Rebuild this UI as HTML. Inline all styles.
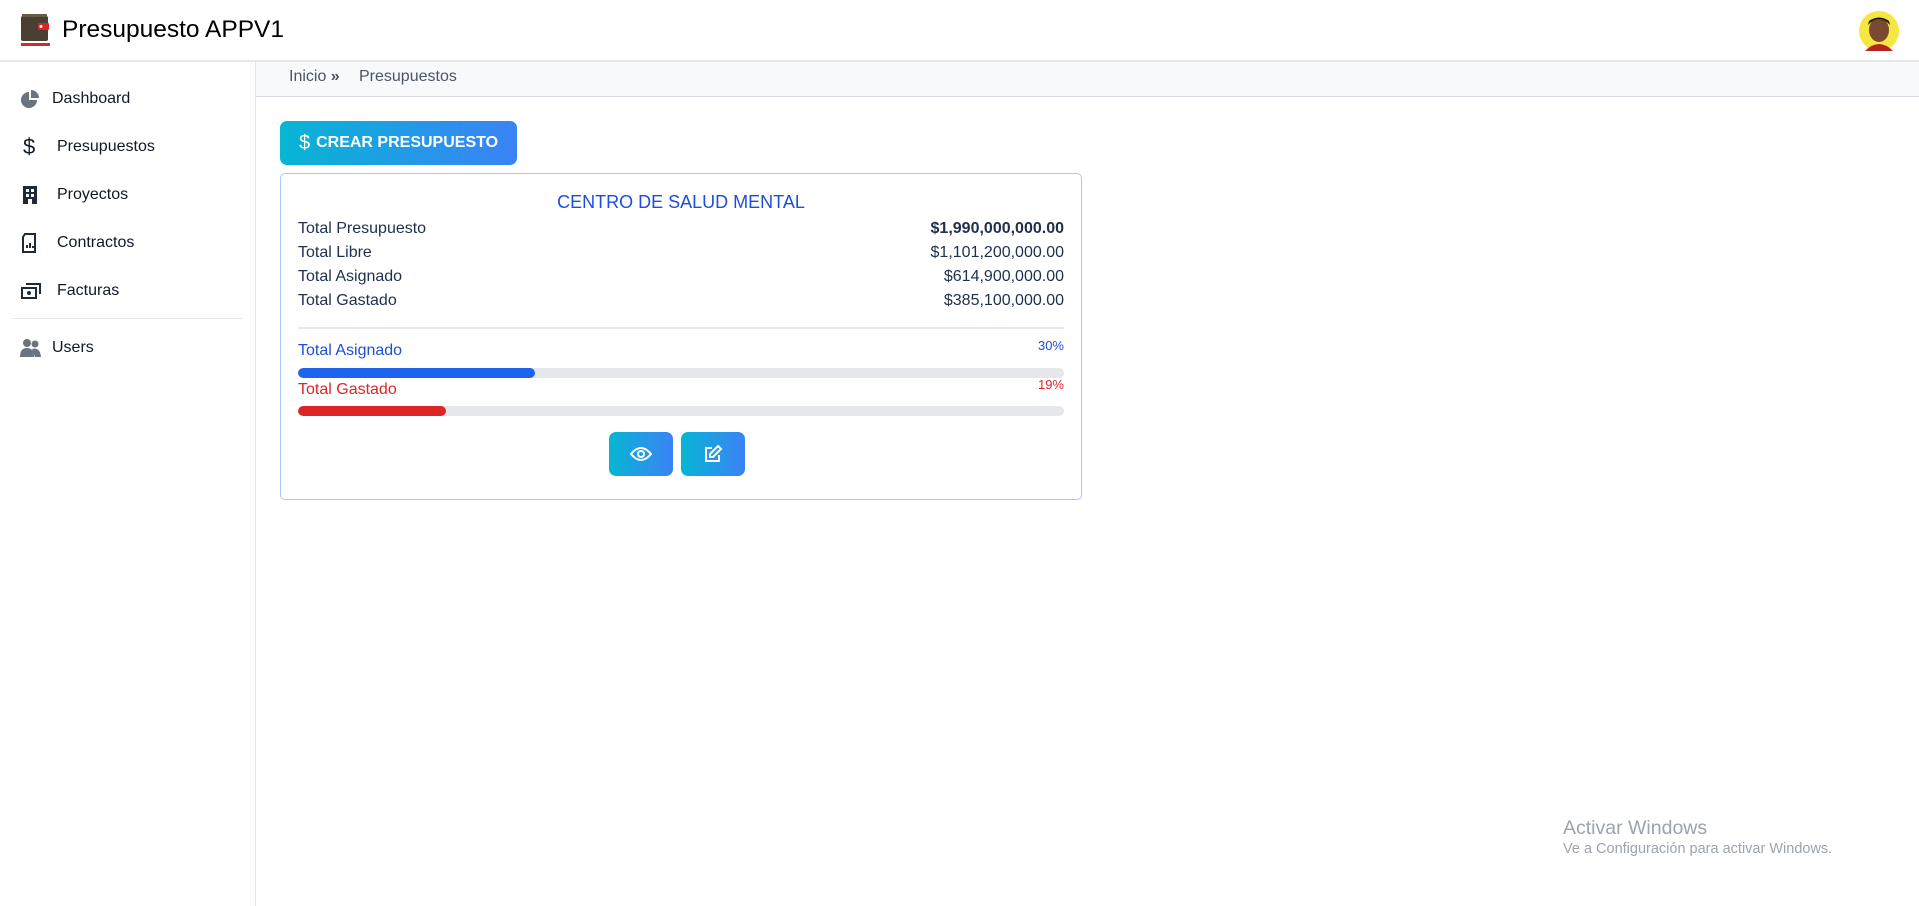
<!DOCTYPE html>
<html><head><meta charset="utf-8"><style>
*{box-sizing:border-box;margin:0;padding:0}
body{width:1919px;height:906px;background:#fff;font-family:"Liberation Sans",sans-serif;position:relative;overflow:hidden;color:#374151}
.hdr{position:absolute;left:0;top:0;width:1919px;height:62px;border-bottom:2px solid #e5e7eb;background:#fff}
.title{position:absolute;left:62px;top:16px;font-size:24.5px;color:#000}
.side{position:absolute;left:0;top:62px;width:256px;height:844px;border-right:1px solid #e5e7eb}
.item{position:absolute;left:0;font-size:16px;color:#111827;display:flex;align-items:center}
.item svg{position:absolute;left:20px}
.bc{position:absolute;left:256px;top:62px;width:1663px;height:35px;background:#f8f9fb;border-bottom:1px solid #d9dce2;font-size:16px;color:#4b5563}
.btn{position:absolute;background:linear-gradient(90deg,#06b6d4,#3b82f6);border-radius:7px;color:#fff;display:flex;align-items:center;justify-content:center}
.card{position:absolute;left:280px;top:173px;width:802px;height:327px;border:1px solid #a9c8f7;border-radius:5px}
.row{position:absolute;left:17px;right:17px;font-size:16px;color:#1f2f4d;display:flex;justify-content:space-between}
.bar{position:absolute;left:17px;right:17px;height:10px;background:#e5e7eb;border-radius:5px;overflow:hidden}
</style></head><body>
<div class="hdr">
 <svg style="position:absolute;left:21px;top:14px" width="29" height="34" viewBox="0 0 29 34"><rect x="0" y="2" width="27" height="25" rx="2" fill="#4a3f33"/><rect x="1" y="0" width="25" height="3" fill="#6b5a46"/><rect x="17" y="9" width="11" height="7" rx="1" fill="#d62828"/><circle cx="20" cy="12.5" r="1.5" fill="#fff"/><rect x="0" y="29" width="29" height="3" fill="#d62828"/></svg>
 <div class="title">Presupuesto APPV1</div>
 <svg style="position:absolute;left:1859px;top:11px" width="40" height="40" viewBox="0 0 40 40"><circle cx="20" cy="20" r="20" fill="#f5e642"/><ellipse cx="20" cy="19" rx="10" ry="12" fill="#7a4a30"/><path d="M9 14 Q20 2 31 14 L30 10 Q20 3 10 10Z" fill="#1b1b1b"/><path d="M6 40 Q20 26 34 40Z" fill="#b3261e"/></svg>
</div>
<div class="side">
 <div class="item" style="top:28px"><svg width="20" height="20" viewBox="0 0 20 20"><path d="M9 3a8 8 0 1 0 8 8H9z" fill="#6b7280"/><path d="M11 1v8h8a8 8 0 0 0-8-8z" fill="#6b7280"/></svg><span style="margin-left:52px">Dashboard</span></div>
 <div class="item" style="top:76px"><svg width="20" height="22" viewBox="0 0 20 22"><text x="3" y="18" font-size="22" font-family="Liberation Sans" fill="#111827">$</text></svg><span style="margin-left:57px">Presupuestos</span></div>
 <div class="item" style="top:124px"><svg width="20" height="20" viewBox="0 0 20 20"><rect x="3" y="1" width="14" height="18" fill="#1f2937"/><rect x="6" y="4" width="3" height="3" fill="#fff"/><rect x="11" y="4" width="3" height="3" fill="#fff"/><rect x="6" y="9" width="3" height="3" fill="#fff"/><rect x="11" y="9" width="3" height="3" fill="#fff"/><rect x="8" y="14" width="4" height="5" fill="#fff"/></svg><span style="margin-left:57px">Proyectos</span></div>
 <div class="item" style="top:172px"><svg width="20" height="20" viewBox="0 0 20 20"><path d="M5 1h10v18H3V4z" fill="none" stroke="#1f2937" stroke-width="2"/><path d="M7 15v-3M10 15v-5M13 15v-2" stroke="#1f2937" stroke-width="2"/></svg><span style="margin-left:57px">Contractos</span></div>
 <div class="item" style="top:220px"><svg width="22" height="20" viewBox="0 0 22 20"><rect x="2" y="7" width="14" height="10" fill="none" stroke="#1f2937" stroke-width="2"/><path d="M6 3h14v10" fill="none" stroke="#1f2937" stroke-width="2"/><circle cx="9" cy="12" r="2" fill="#1f2937"/></svg><span style="margin-left:57px">Facturas</span></div>
 <div style="position:absolute;left:12px;top:256px;width:231px;height:1px;background:#e5e7eb"></div>
 <div class="item" style="top:277px"><svg width="22" height="20" viewBox="0 0 22 20"><circle cx="7" cy="5" r="4" fill="#6b7280"/><circle cx="15" cy="6" r="3.5" fill="#6b7280"/><path d="M0 19q0-9 7-9t7 9z" fill="#6b7280"/><path d="M12 11q8-2 9 8h-6z" fill="#6b7280"/></svg><span style="margin-left:52px">Users</span></div>
</div>
<div class="bc"><span style="position:absolute;left:33px;top:6px">Inicio <b style="font-weight:bold">&#187;</b></span><span style="position:absolute;left:103px;top:6px">Presupuestos</span></div>
<div class="btn" style="left:280px;top:121px;width:237px;height:44px;font-size:16px;font-weight:bold"><span style="font-size:20px;font-weight:normal;margin-right:6px">$</span>CREAR PRESUPUESTO</div>
<div class="card">
 <div style="position:absolute;left:0;right:0;top:18px;text-align:center;font-size:18px;color:#1d4ed8">CENTRO DE SALUD MENTAL</div>
 <div class="row" style="top:46px"><span>Total Presupuesto</span><span style="font-weight:bold">$1,990,000,000.00</span></div>
 <div class="row" style="top:70px"><span>Total Libre</span><span>$1,101,200,000.00</span></div>
 <div class="row" style="top:94px"><span>Total Asignado</span><span>$614,900,000.00</span></div>
 <div class="row" style="top:118px"><span>Total Gastado</span><span>$385,100,000.00</span></div>
 <div style="position:absolute;left:17px;right:17px;top:153px;height:2px;background:#e5e7eb"></div>
 <div class="row" style="top:168px;color:#1d4ed8"><span>Total Asignado</span><span style="font-size:13px;margin-top:-4px">30%</span></div>
 <div class="bar" style="top:194px"><div style="width:31%;height:100%;background:#1d63ec;border-radius:5px"></div></div>
 <div class="row" style="top:207px;color:#dc2626"><span>Total Gastado</span><span style="font-size:13px;margin-top:-4px">19%</span></div>
 <div class="bar" style="top:232px"><div style="width:19.3%;height:100%;background:#dc2626;border-radius:5px"></div></div>
 <div class="btn" style="left:328px;top:258px;width:64px;height:44px"><svg width="22" height="16" viewBox="0 0 22 16"><path d="M1 8q10-12 20 0q-10 12-20 0z" fill="none" stroke="#fff" stroke-width="2"/><circle cx="11" cy="8" r="3" fill="none" stroke="#fff" stroke-width="2"/></svg></div>
 <div class="btn" style="left:400px;top:258px;width:64px;height:44px"><svg width="20" height="20" viewBox="0 0 20 20"><path d="M9 4H3v13h13v-6" fill="none" stroke="#fff" stroke-width="2"/><path d="M15 2l3 3-8 8H7v-3z" fill="none" stroke="#fff" stroke-width="2"/></svg></div>
</div>
<div style="position:absolute;left:1563px;top:817px;font-size:19.5px;color:#9ca3af">Activar Windows</div>
<div style="position:absolute;left:1563px;top:841px;font-size:14.5px;color:#9ca3af">Ve a Configuración para activar Windows.</div>
</body></html>
